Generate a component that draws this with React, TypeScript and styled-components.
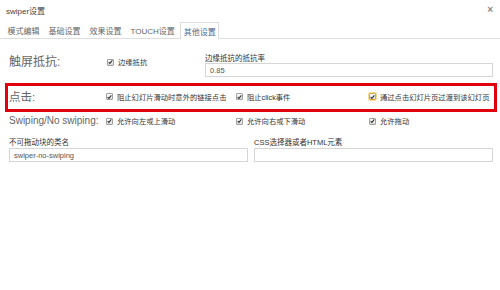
import React from "react";
import styled, { createGlobalStyle, css } from "styled-components";

const Global = createGlobalStyle`
  html, body { margin: 0; padding: 0; background: #fff; }
  body { font-family: "Liberation Sans", "Noto Sans CJK SC", sans-serif; color: #333; }
  * { box-sizing: border-box; }
`;

const Dialog = styled.div`
  width: 500px;
  height: 290px;
  background: #fff;
`;

const Header = styled.div`
  height: 20px;
  display: flex;
  align-items: center;
  justify-content: space-between;
  padding: 0 7px 0 6px;
`;

const Title = styled.span`
  font-size: 8px;
  color: #444;
`;

const Close = styled.span`
  font-size: 10px;
  line-height: 10px;
  color: #888;
  font-weight: bold;
`;

const TabBar = styled.div`
  margin-top: 2px;
  height: 17px;
  display: flex;
  align-items: stretch;
  padding-left: 4px;
  border-bottom: 1px solid #ddd;
`;

const Tab = styled.div<{ $active?: boolean }>`
  display: flex;
  align-items: center;
  padding: 0 2.5px;
  margin-right: 2px;
  font-size: 8px;
  color: #666;
  border: 1px solid transparent;
  border-bottom: none;
  ${(p) =>
    p.$active &&
    css`
      color: #4a6a94;
      border-color: #ddd;
      background: #fff;
      height: 17px;
      margin-bottom: -1px;
    `}
`;

const Body = styled.div`
  padding: 15px 7px 0 9px;
`;

const Row = styled.div<{ $cols: string; $align?: string; $height?: number; $gap?: number; $top?: number }>`
  display: grid;
  grid-template-columns: ${(p) => p.$cols};
  align-items: ${(p) => p.$align || "center"};
  column-gap: ${(p) => p.$gap || 0}px;
  margin-top: ${(p) => p.$top || 0}px;
  ${(p) => p.$height && `min-height: ${p.$height}px;`}
`;

const Highlight = styled.div`
  margin: 6px -4px 0 -4px;
  border: 3px solid #e0000e;
  padding: 0 1px 2px 1px;
`;

const BigLabel = styled.div<{ $size?: number }>`
  font-size: ${(p) => p.$size || 12}px;
  line-height: 16px;
  color: #666;
  white-space: nowrap;
`;

const CheckLabel = styled.label`
  display: flex;
  align-items: center;
  height: 16px;
  font-size: 7.3px;
  color: #333;
  white-space: nowrap;
`;

const Box = styled.span<{ $focus?: boolean }>`
  width: 7px;
  height: 7px;
  margin-right: 4px;
  border: 1px solid ${(p) => (p.$focus ? "#d9a93a" : "#a0a0a0")};
  border-radius: 1px;
  background: linear-gradient(#ffffff, #dcdcdc);
  display: flex;
  align-items: center;
  justify-content: center;
  ${(p) => p.$focus && "box-shadow: 0 0 0 1px #f3dc9a;"}
`;

const Field = styled.div`
  display: flex;
  flex-direction: column;
`;

const FieldLabel = styled.div<{ $lh?: number }>`
  font-size: 7.5px;
  line-height: ${(p) => p.$lh || 9}px;
  color: #333;
  white-space: nowrap;
`;

const Input = styled.div`
  height: 14px;
  border: 1px solid #d6d6d6;
  padding-left: 4px;
  display: flex;
  align-items: center;
  font-size: 7.5px;
  color: #555;
  background: #fff;
`;

const Check = ({ label, focus }: { label: string; focus?: boolean }) => (
  <CheckLabel>
    <Box $focus={focus}>
      <svg width="6" height="6" viewBox="0 0 6 6">
        <path d="M0.8 3.1 L2.3 4.6 L5.2 1.1" fill="none" stroke="#333" strokeWidth="1.3" />
      </svg>
    </Box>
    {label}
  </CheckLabel>
);

const tabs = ["模式编辑", "基础设置", "效果设置", "TOUCH设置", "其他设置"];

export default function App() {
  return (
    <>
      <Global />
      <Dialog>
        <Header>
          <Title>swiper设置</Title>
          <Close>×</Close>
        </Header>
        <TabBar>
          {tabs.map((t, i) => (
            <Tab key={t} $active={i === tabs.length - 1}>
              {t}
            </Tab>
          ))}
        </TabBar>
        <Body>
          <Row $cols="98px 98px 1fr" $align="start">
            <BigLabel>触屏抵抗:</BigLabel>
            <Check label="边缘抵抗" />
            <Field>
              <FieldLabel>边缘抵抗的抵抗率</FieldLabel>
              <Input>0.85</Input>
            </Field>
          </Row>
          <Highlight>
            <Row $cols="97px 130px 133px 1fr" $height={21}>
              <BigLabel $size={11.5}>点击:</BigLabel>
              <Check label="阻止幻灯片滑动时意外的链接点击" />
              <Check label="阻止click事件" />
              <Check label="通过点击幻灯片页过渡到该幻灯页" focus />
            </Row>
          </Highlight>
          <Row $cols="97px 130px 133px 1fr" $height={18}>
            <BigLabel $size={10}>Swiping/No swiping:</BigLabel>
            <Check label="允许向左或上滑动" />
            <Check label="允许向右或下滑动" />
            <Check label="允许拖动" />
          </Row>
          <Row $cols="1fr 1fr" $align="start" $gap={6} $top={8}>
            <Field>
              <FieldLabel $lh={10}>不可拖动块的类名</FieldLabel>
              <Input>swiper-no-swiping</Input>
            </Field>
            <Field>
              <FieldLabel $lh={10}>CSS选择器或者HTML元素</FieldLabel>
              <Input />
            </Field>
          </Row>
        </Body>
      </Dialog>
    </>
  );
}
